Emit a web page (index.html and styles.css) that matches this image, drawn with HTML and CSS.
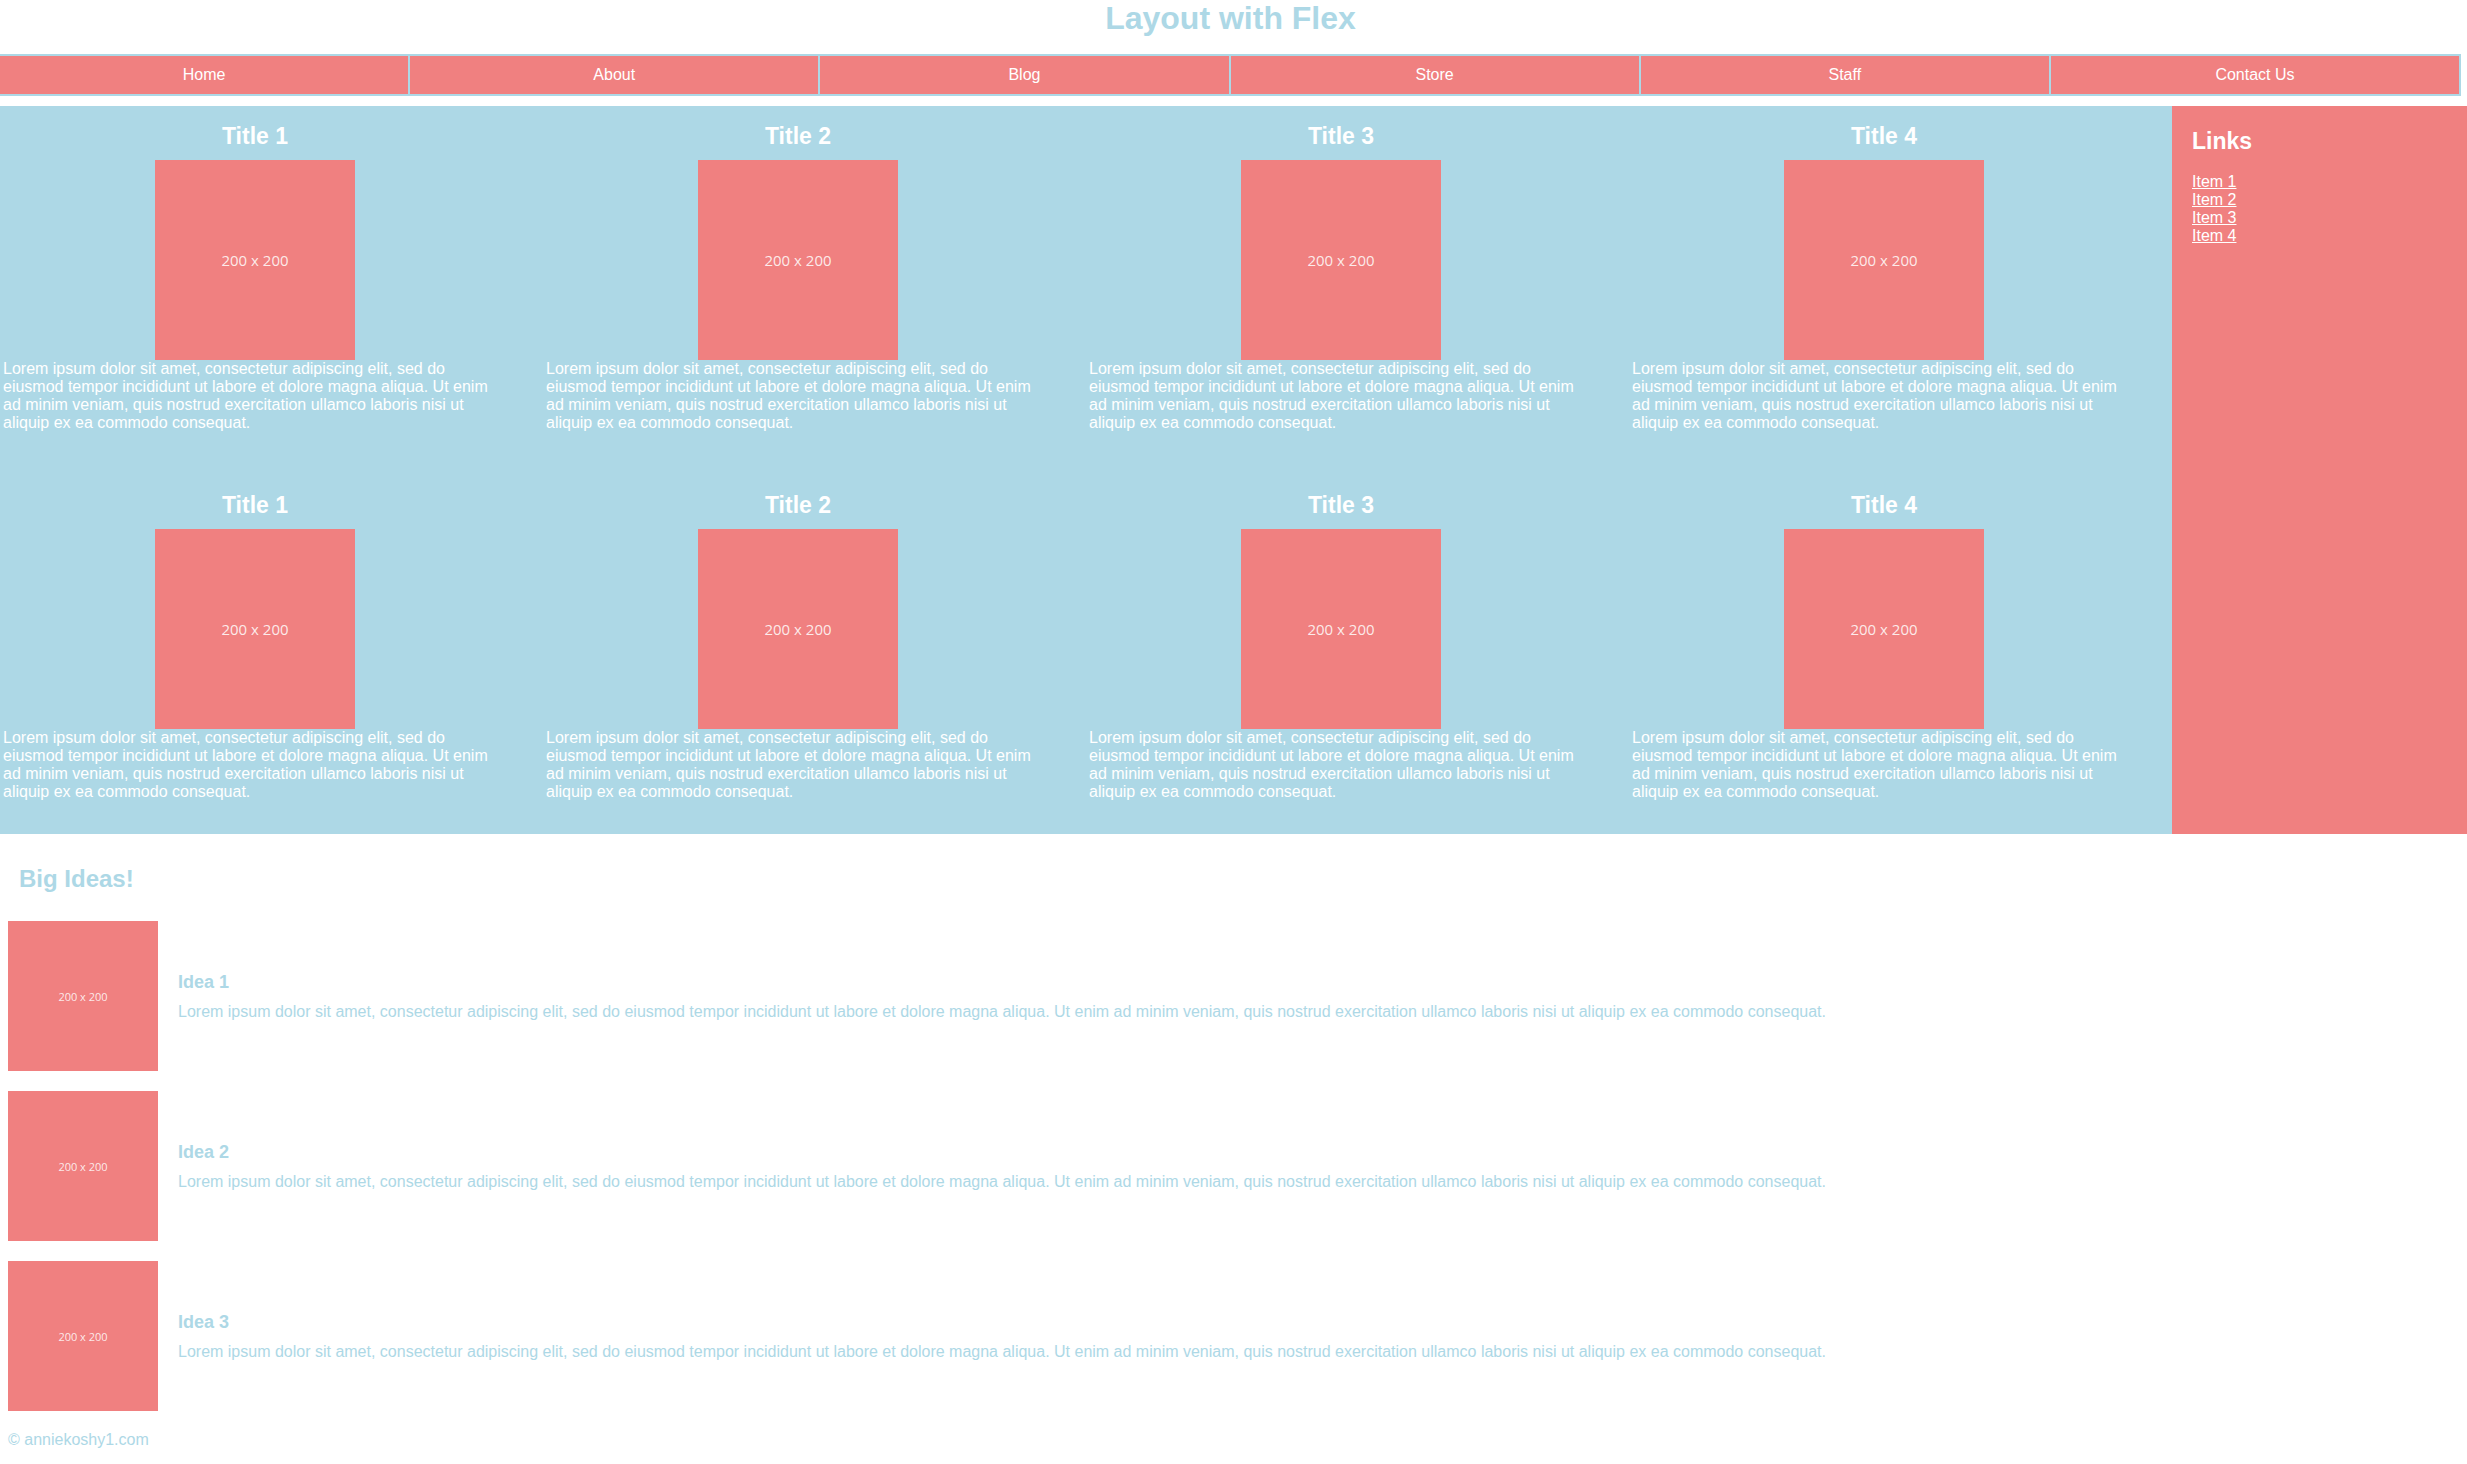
FILE: index.html
```html
<!DOCTYPE html>
<html lang="en">

<head>
    <meta charset="UTF-8">
    <meta name="viewport" content="width=device-width, initial-scale=1.0">
    <title>Layout with Flex</title>
    <link rel="stylesheet" href="styles.css">
</head>

<body>
    <header class="header">
        <h1>Layout with Flex</h1>
        <nav class="nav">
            <ul>
                <li><a href="#">Home</a></li>
                <li><a href="#">About</a></li>
                <li><a href="#">Blog</a></li>
                <li><a href="#">Store</a></li>
                <li><a href="#">Staff</a></li>
                <li><a href="#">Contact Us</a></li>
            </ul>
        </nav>
    </header>

    <main class="main">
        <div class="cards">
            <div class="card">
                <h2>Title 1</h2>
                <div class="placeholder">200 x 200</div>
                <p>Lorem ipsum dolor sit amet, consectetur adipiscing elit, sed do eiusmod tempor incididunt ut labore et dolore magna aliqua. Ut enim ad minim veniam, quis nostrud exercitation ullamco laboris nisi ut aliquip ex ea commodo consequat.</p>
            </div>
            <div class="card">
                <h2>Title 2</h2>
                <div class="placeholder">200 x 200</div>
                <p>Lorem ipsum dolor sit amet, consectetur adipiscing elit, sed do eiusmod tempor incididunt ut labore et dolore magna aliqua. Ut enim ad minim veniam, quis nostrud exercitation ullamco laboris nisi ut aliquip ex ea commodo consequat.</p>
            </div>
            <div class="card">
                <h2>Title 3</h2>
                <div class="placeholder">200 x 200</div>
                <p>Lorem ipsum dolor sit amet, consectetur adipiscing elit, sed do eiusmod tempor incididunt ut labore et dolore magna aliqua. Ut enim ad minim veniam, quis nostrud exercitation ullamco laboris nisi ut aliquip ex ea commodo consequat.</p>
            </div>
            <div class="card">
                <h2>Title 4</h2>
                <div class="placeholder">200 x 200</div>
                <p>Lorem ipsum dolor sit amet, consectetur adipiscing elit, sed do eiusmod tempor incididunt ut labore et dolore magna aliqua. Ut enim ad minim veniam, quis nostrud exercitation ullamco laboris nisi ut aliquip ex ea commodo consequat.</p>
            </div>
            <div class="card">
                <h2>Title 1</h2>
                <div class="placeholder">200 x 200</div>
                <p>Lorem ipsum dolor sit amet, consectetur adipiscing elit, sed do eiusmod tempor incididunt ut labore et dolore magna aliqua. Ut enim ad minim veniam, quis nostrud exercitation ullamco laboris nisi ut aliquip ex ea commodo consequat.</p>
            </div>
            <div class="card">
                <h2>Title 2</h2>
                <div class="placeholder">200 x 200</div>
                <p>Lorem ipsum dolor sit amet, consectetur adipiscing elit, sed do eiusmod tempor incididunt ut labore et dolore magna aliqua. Ut enim ad minim veniam, quis nostrud exercitation ullamco laboris nisi ut aliquip ex ea commodo consequat.</p>
            </div>
            <div class="card">
                <h2>Title 3</h2>
                <div class="placeholder">200 x 200</div>
                <p>Lorem ipsum dolor sit amet, consectetur adipiscing elit, sed do eiusmod tempor incididunt ut labore et dolore magna aliqua. Ut enim ad minim veniam, quis nostrud exercitation ullamco laboris nisi ut aliquip ex ea commodo consequat.</p>
            </div>
            <div class="card">
                <h2>Title 4</h2>
                <div class="placeholder">200 x 200</div>
                <p>Lorem ipsum dolor sit amet, consectetur adipiscing elit, sed do eiusmod tempor incididunt ut labore et dolore magna aliqua. Ut enim ad minim veniam, quis nostrud exercitation ullamco laboris nisi ut aliquip ex ea commodo consequat.</p>
            </div>
        </div>

        <aside class="sidebar">
            <h2>Links</h2>
            <ul>
                <li><a href="#">Item 1</a></li>
                <li><a href="#">Item 2</a></li>
                <li><a href="#">Item 3</a></li>
                <li><a href="#">Item 4</a></li>
            </ul>
        </aside>
    </main>

    <section class="ideas">
        <h2>Big Ideas!</h2>
        <div class="idea">
            <div class="placeholder small">200 x 200</div>
            <div class="idea-text">
                <h3>Idea 1</h3>
                <p>Lorem ipsum dolor sit amet, consectetur adipiscing elit, sed do eiusmod tempor incididunt ut labore et dolore magna aliqua. Ut enim ad minim veniam, quis nostrud exercitation ullamco laboris nisi ut aliquip ex ea commodo consequat.</p>
            </div>
        </div>
        <div class="idea">
            <div class="placeholder small">200 x 200</div>
            <div class="idea-text">
                <h3>Idea 2</h3>
                <p>Lorem ipsum dolor sit amet, consectetur adipiscing elit, sed do eiusmod tempor incididunt ut labore et dolore magna aliqua. Ut enim ad minim veniam, quis nostrud exercitation ullamco laboris nisi ut aliquip ex ea commodo consequat.</p>
            </div>
        </div>
        <div class="idea">
            <div class="placeholder small">200 x 200</div>
            <div class="idea-text">
                <h3>Idea 3</h3>
                <p>Lorem ipsum dolor sit amet, consectetur adipiscing elit, sed do eiusmod tempor incididunt ut labore et dolore magna aliqua. Ut enim ad minim veniam, quis nostrud exercitation ullamco laboris nisi ut aliquip ex ea commodo consequat.</p>
            </div>
        </div>
    </section>

    <footer class="footer">
        <p>&copy; anniekoshy1.com</p>
    </footer>
</body>

</html>
```

FILE: styles.css
```css
body {
    font-family: 'Liberation Sans', Arial, sans-serif;
    font-size: 16px;
    margin: 0;
    padding: 0;
    background-color: #fff;
}

.header h1 {
    margin: 0 6px 17px 0;
    text-align: center;
    font-size: 32px;
    color: lightblue;
}

.nav {
    margin: 0 6px 10px 0;
}

.nav ul {
    list-style: none;
    margin: 0;
    padding: 0;
    display: flex;
    border-top: 2px solid lightblue;
    border-bottom: 2px solid lightblue;
}

.nav ul li {
    flex: 1;
    background-color: lightcoral;
    border-right: 2px solid lightblue;
    text-align: center;
    padding: 10px 0;
}

.nav ul li a {
    color: #fff;
    text-decoration: none;
}

.main {
    display: flex;
    background-color: lightblue;
}

.cards {
    flex: 1;
    display: flex;
    flex-wrap: wrap;
    row-gap: 43px;
    padding-bottom: 33px;
}

.card {
    width: 25%;
    box-sizing: border-box;
    padding: 17px 36px 0 3px;
    color: #fff;
}

.card h2 {
    margin: 0 0 10px;
    font-size: 23px;
    text-align: center;
}

.card p {
    margin: 0;
}

.placeholder {
    width: 200px;
    height: 200px;
    margin: 0 auto;
    background-color: lightcoral;
    color: rgba(255, 255, 255, 0.85);
    font-family: 'Open Sans', sans-serif;
    font-size: 15px;
    display: flex;
    align-items: center;
    justify-content: center;
}

.placeholder.small {
    width: 150px;
    height: 150px;
    margin: 0;
    font-size: 11px;
    flex-shrink: 0;
}

.sidebar {
    width: 295px;
    box-sizing: border-box;
    background-color: lightcoral;
    padding: 22px 20px;
    color: #fff;
}

.sidebar h2 {
    margin: 0 0 18px;
    font-size: 23px;
}

.sidebar ul {
    list-style: none;
    margin: 0;
    padding: 0;
}

.sidebar a {
    color: #fff;
}

.ideas {
    padding: 0 8px;
    color: lightblue;
}

.ideas h2 {
    margin: 31px 11px 28px;
    font-size: 24px;
}

.idea {
    display: flex;
    align-items: center;
    gap: 20px;
    margin-bottom: 20px;
}

.idea h3 {
    margin: 0 0 10px;
    font-size: 18px;
}

.idea p {
    margin: 0;
}

.footer {
    padding: 0 8px;
    color: lightblue;
}

.footer p {
    margin: 0;
}
```
